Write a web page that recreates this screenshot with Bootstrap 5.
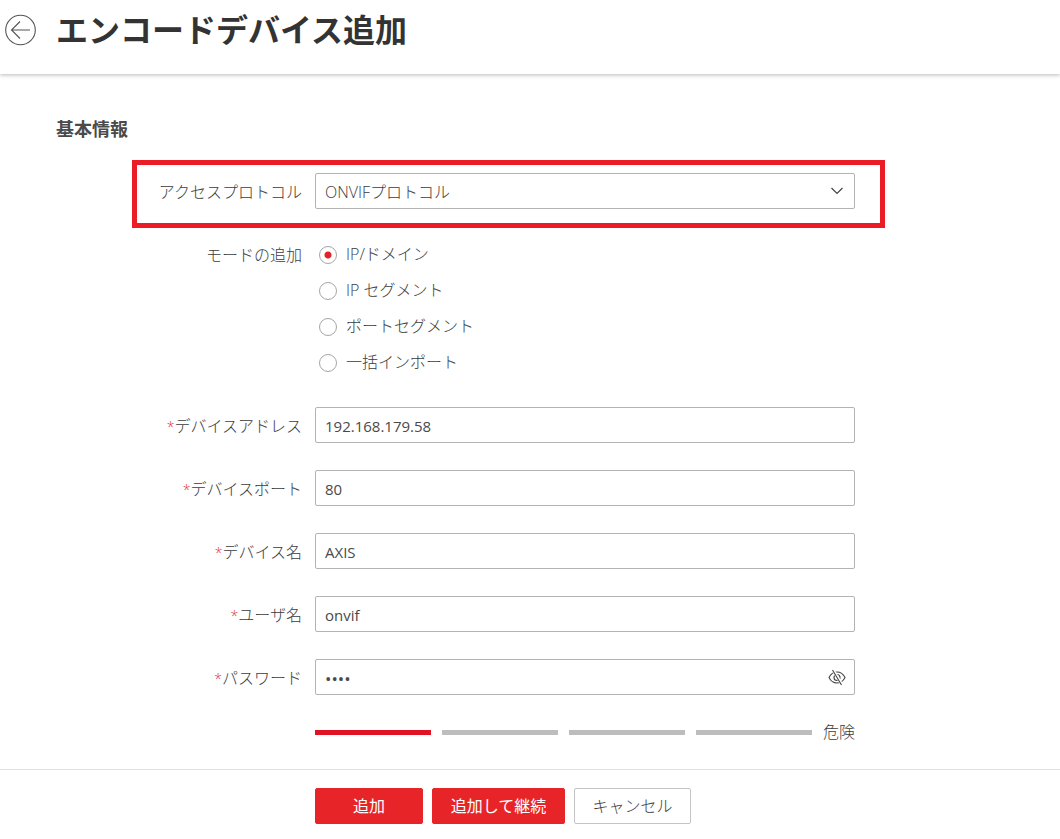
<!DOCTYPE html>
<html lang="ja">
<head>
<meta charset="utf-8">
<meta name="viewport" content="width=device-width, initial-scale=1">
<title>エンコードデバイス追加</title>
<link href="https://cdn.jsdelivr.net/npm/bootstrap@5.3.0/dist/css/bootstrap.min.css" rel="stylesheet">
<style>
  :root { --ink: #3c3c3c; --line: #b3b3b3; }
  body { font-family: "Open Sans", "Noto Sans CJK JP", sans-serif; font-size: 16px; line-height: 24px; color: var(--ink); background: #fff; }
  .page-head { height: 74px; padding: 0 5px 14px; gap: 19px; box-shadow: 0 1px 4px rgba(0,0,0,.28); }
  .page-head h1 { font-size: 32px; line-height: 48px; font-weight: 700; color: #333; }
  .back-btn { width: 32px; height: 32px; color: #555; }
  .section-title { font-size: 18px; line-height: 24px; font-weight: 700; margin: 43px 0 32px 56px; color: #4a4a4a; }
  .device-form { max-width: 855px; font-weight: 300; }
  .form-line { gap: 13px; margin-bottom: 27px; }
  .line-label { flex: 0 0 302px; text-align: right; line-height: 34px; padding-top: 2px; }
  .req { color: #e0303a; font-size: 14px; line-height: 1; }
  .form-line .form-control, .form-line .form-select { height: 36px; padding: 2px 9px 0; font-size: 15px; font-weight: 400; line-height: 24px; color: #4a4a4a; border: 1px solid var(--line); border-radius: 2px; }
  .form-line .form-select { font-size: 16px; font-weight: 300; color: var(--ink); padding-right: 36px; background-size: 14px 14px; background-position: right 10px center;
    background-image: url("data:image/svg+xml,%3Csvg xmlns='http://www.w3.org/2000/svg' viewBox='0 0 14 14'%3E%3Cpath d='M1.5 4 7 9.500 12.500 4' fill='none' stroke='%23444' stroke-width='1.200'/%3E%3C/svg%3E"); }
  .form-line .form-control[type="password"] { font-size: 17px; }
  .highlight-box::before { content: ""; position: absolute; inset: -13px -30px -19px 132px; border: 5px solid #eb1c26; pointer-events: none; }
  .mode-item { height: 36px; gap: 9px; padding-left: 4px; }
  .mode-item .form-check-input { width: 18px; height: 18px; margin: 2px 0 0; border: 1px solid #a6a6a6; background-color: #fff; }
  .mode-item .form-check-input:checked { background-image: radial-gradient(circle, #e0242a 3px, transparent 4px); background-size: 100% 100%; }
  .eye-btn { top: 8px; right: 8px; width: 20px; height: 20px; color: #444; }
  .strength { gap: 11px; height: 20px; }
  .strength-bar { height: 5px; background: #bdbdbd; }
  .strength-bar.on { background: #e01224; }
  .page-foot { border-top: 1px solid #e2e2e2; padding: 18px 0 15px 315px; gap: 9px; }
  .page-foot .btn { height: 36px; padding: 0 17px; line-height: 34px; font-size: 16px; border-radius: 2px; }
  .btn-brand { --bs-btn-color: #fff; --bs-btn-bg: #e72528; --bs-btn-border-color: #e72528; --bs-btn-hover-color: #fff; --bs-btn-hover-bg: #c91d20; --bs-btn-hover-border-color: #c91d20; }
  .btn-add { min-width: 108px; }
  .btn-continue { min-width: 133px; }
  .btn-plain { --bs-btn-color: #3c3c3c; --bs-btn-bg: #fff; --bs-btn-border-color: #c4c4c4; --bs-btn-hover-bg: #f5f5f5; --bs-btn-hover-border-color: #aaa; min-width: 117px; font-weight: 300; }
</style>
</head>
<body class="d-flex flex-column min-vh-100">
<header class="page-head d-flex align-items-center">
  <button type="button" class="back-btn btn border-0 p-0 d-flex flex-shrink-0" aria-label="戻る">
    <svg width="32" height="32" viewBox="0 0 32 32" fill="none" stroke="currentColor" stroke-width="1.1"><circle cx="15.5" cy="16" r="14.800"/><path d="M25 16H6.500M15 7.500 6.500 16 15 24.500"/></svg>
  </button>
  <h1 class="m-0">エンコードデバイス追加</h1>
</header>

<main class="flex-grow-1">
  <h2 class="section-title">基本情報</h2>
  <form id="device-form" class="device-form">
    <div class="form-line highlight-box d-flex position-relative">
      <label class="line-label" for="protocol">アクセスプロトコル</label>
      <select id="protocol" class="form-select"><option>ONVIFプロトコル</option></select>
    </div>
    <div class="form-line d-flex" role="radiogroup" aria-labelledby="mode-label">
      <div class="line-label" id="mode-label">モードの追加</div>
      <div class="flex-grow-1">
        <div class="mode-item d-flex align-items-center"><input class="form-check-input" type="radio" name="mode" id="m1" checked><label for="m1">IP/ドメイン</label></div>
        <div class="mode-item d-flex align-items-center"><input class="form-check-input" type="radio" name="mode" id="m2"><label for="m2">IP セグメント</label></div>
        <div class="mode-item d-flex align-items-center"><input class="form-check-input" type="radio" name="mode" id="m3"><label for="m3">ポートセグメント</label></div>
        <div class="mode-item d-flex align-items-center"><input class="form-check-input" type="radio" name="mode" id="m4"><label for="m4">一括インポート</label></div>
      </div>
    </div>
    <div class="form-line d-flex">
      <label class="line-label" for="address"><span class="req">*</span>デバイスアドレス</label>
      <input id="address" class="form-control" type="text" value="192.168.179.58">
    </div>
    <div class="form-line d-flex">
      <label class="line-label" for="port"><span class="req">*</span>デバイスポート</label>
      <input id="port" class="form-control" type="text" value="80">
    </div>
    <div class="form-line d-flex">
      <label class="line-label" for="devname"><span class="req">*</span>デバイス名</label>
      <input id="devname" class="form-control" type="text" value="AXIS">
    </div>
    <div class="form-line d-flex">
      <label class="line-label" for="user"><span class="req">*</span>ユーザ名</label>
      <input id="user" class="form-control" type="text" value="onvif">
    </div>
    <div class="form-line d-flex">
      <label class="line-label" for="password"><span class="req">*</span>パスワード</label>
      <div class="position-relative flex-grow-1">
        <input id="password" class="form-control" type="password" value="axis">
        <button type="button" class="eye-btn btn border-0 p-0 d-flex position-absolute" aria-label="パスワードを表示">
          <svg width="20" height="20" viewBox="0 0 20 20" fill="none" stroke="currentColor" stroke-width="1.1"><path d="M2 10.500C4 6.500 7 5 10 5s6 1.500 8 5.500C16 14.500 13 16 10 16s-6-1.500-8-5.500z"/><circle cx="10" cy="10.500" r="3"/><path d="M6 3l9 15" stroke="#fff" stroke-width="3"/><path d="M5.500 3 14.500 18"/></svg>
        </button>
      </div>
    </div>
    <div class="form-line d-flex mb-0">
      <div class="line-label py-0 lh-1"></div>
      <div class="strength flex-grow-1 d-flex align-items-center">
        <div class="strength-bar on flex-fill"></div>
        <div class="strength-bar flex-fill"></div>
        <div class="strength-bar flex-fill"></div>
        <div class="strength-bar flex-fill"></div>
        <span>危険</span>
      </div>
    </div>
  </form>
</main>

<footer class="page-foot d-flex">
  <button type="submit" form="device-form" class="btn btn-brand btn-add">追加</button>
  <button type="button" class="btn btn-brand btn-continue">追加して継続</button>
  <button type="button" class="btn btn-plain">キャンセル</button>
</footer>
<script src="https://cdn.jsdelivr.net/npm/bootstrap@5.3.0/dist/js/bootstrap.bundle.min.js"></script>
</body>
</html>
